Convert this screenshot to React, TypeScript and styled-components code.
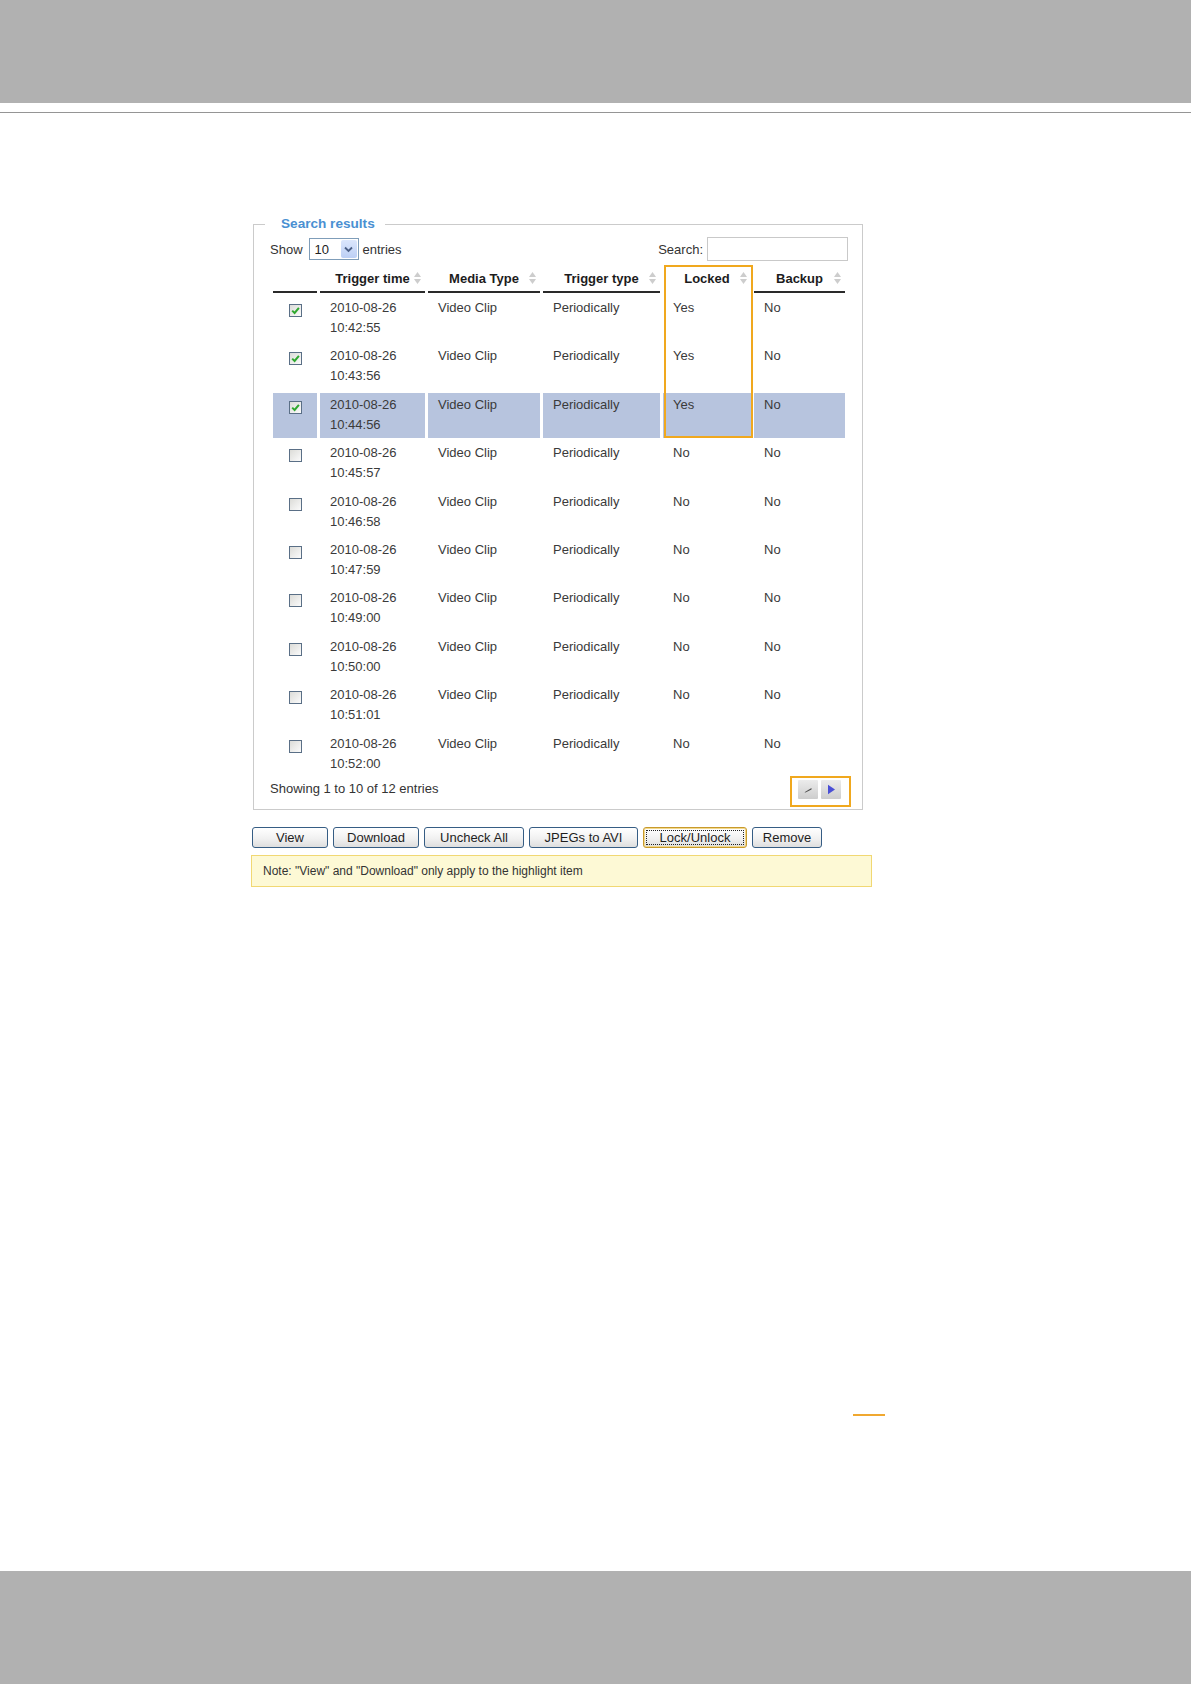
import React from 'react'
import styled, { createGlobalStyle, css } from 'styled-components'

const GlobalStyle = createGlobalStyle`
  html, body {
    margin: 0;
    padding: 0;
    background: #fff;
  }
  body {
    font-family: 'Liberation Sans', Arial, sans-serif;
    color: #333;
  }
`

type Row = { time: string; checked: boolean; locked: boolean }

const times = [
  '10:42:55',
  '10:43:56',
  '10:44:56',
  '10:45:57',
  '10:46:58',
  '10:47:59',
  '10:49:00',
  '10:50:00',
  '10:51:01',
  '10:52:00',
]

const rows: Row[] = times.map((time, i) => ({
  time,
  checked: i < 3,
  locked: i < 3,
}))

const HIGHLIGHT = 2

const columns = [
  { id: 'check', title: '', width: 44 },
  { id: 'time', title: 'Trigger time', width: 105 },
  { id: 'media', title: 'Media Type', width: 112 },
  { id: 'trigger', title: 'Trigger type', width: 117 },
  { id: 'locked', title: 'Locked', width: 88 },
  { id: 'backup', title: 'Backup', width: 91 },
]

const buttons = [
  { label: 'View', width: 76 },
  { label: 'Download', width: 86 },
  { label: 'Uncheck All', width: 100 },
  { label: 'JPEGs to AVI', width: 109 },
  { label: 'Lock/Unlock', width: 104, focused: true },
  { label: 'Remove', width: 70 },
]

const SortArrows = () => (
  <svg width="7" height="14" viewBox="0 0 7 14">
    <path d="M0 6 L3.5 1 L7 6 Z" fill="#cdcdcd" />
    <path d="M0 8 L3.5 13 L7 8 Z" fill="#cdcdcd" />
  </svg>
)

const CheckBox = ({ checked }: { checked: boolean }) => (
  <Box>
    {checked && (
      <svg width="11" height="11" viewBox="0 0 11 11">
        <path
          d="M2.2 5.6 L4.6 8 L8.9 2.8"
          fill="none"
          stroke="#2fa82f"
          strokeWidth="2"
        />
      </svg>
    )}
  </Box>
)

export default function App() {
  return (
    <Page>
      <GlobalStyle />
      <TopBand />
      <Rule />
      <Main>
        <Fieldset>
          <Legend>Search results</Legend>
          <Toolbar>
            <Group>
              Show
              <SelectBox>
                <span>10</span>
                <DropButton>
                  <svg width="9" height="7" viewBox="0 0 9 7">
                    <path
                      d="M1 1.5 L4.5 5 L8 1.5"
                      fill="none"
                      stroke="#4b5f86"
                      strokeWidth="1.8"
                    />
                  </svg>
                </DropButton>
              </SelectBox>
              entries
            </Group>
            <Group>
              Search:
              <SearchInput type="text" />
            </Group>
          </Toolbar>

          <TableWrap>
            <Table>
              <colgroup>
                {columns.map(c => (
                  <col key={c.id} style={{ width: c.width }} />
                ))}
              </colgroup>
              <thead>
                <tr>
                  {columns.map(c => (
                    <Th key={c.id} $bare={c.id === 'locked'}>
                      {c.title && (
                        <HeadInner>
                          <span />
                          <HeadLabel>{c.title}</HeadLabel>
                          <SortArrows />
                        </HeadInner>
                      )}
                    </Th>
                  ))}
                </tr>
              </thead>
              <tbody>
                {rows.map((r, i) => (
                  <tr key={r.time}>
                    <CheckCell $active={i === HIGHLIGHT}>
                      <CheckBox checked={r.checked} />
                    </CheckCell>
                    <Td $active={i === HIGHLIGHT}>
                      2010-08-26
                      <br />
                      {r.time}
                    </Td>
                    <Td $active={i === HIGHLIGHT}>Video Clip</Td>
                    <Td $active={i === HIGHLIGHT}>Periodically</Td>
                    <Td $active={i === HIGHLIGHT}>{r.locked ? 'Yes' : 'No'}</Td>
                    <Td $active={i === HIGHLIGHT}>No</Td>
                  </tr>
                ))}
              </tbody>
            </Table>
            <ColumnMark />
          </TableWrap>

          <Footer>
            <Info>Showing 1 to 10 of 12 entries</Info>
            <Pager>
              <PageButton>
                <svg width="20" height="19" viewBox="0 0 20 19">
                  <path d="M6.5 12.2 L13.5 8 L13.5 9.6 L7.6 12.6 Z" fill="#4e4e4e" />
                </svg>
              </PageButton>
              <PageButton>
                <svg width="20" height="19" viewBox="0 0 20 19">
                  <path d="M7 4.8 L14 9.5 L7 14.2 Z" fill="#4a4fd6" />
                </svg>
              </PageButton>
            </Pager>
          </Footer>
        </Fieldset>

        <ButtonBar>
          {buttons.map(b => (
            <ActionButton key={b.label} $width={b.width} $focused={!!b.focused}>
              {b.label}
            </ActionButton>
          ))}
        </ButtonBar>

        <Note>Note: "View" and "Download" only apply to the highlight item</Note>

        <PageMark />
      </Main>
      <BottomBand />
    </Page>
  )
}

const Page = styled.div`
  display: flex;
  flex-direction: column;
  width: 1191px;
  min-height: 1684px;
`

const TopBand = styled.div`
  height: 103px;
  background: #b1b1b1;
`

const Rule = styled.div`
  margin-top: 9px;
  height: 1px;
  background: #959595;
`

const Main = styled.main`
  flex: 1;
  padding-top: 103px;
`

const Fieldset = styled.fieldset`
  box-sizing: border-box;
  width: 610px;
  margin: 0 0 0 253px;
  padding: 0 14px 2px 16px;
  border: 1px solid #cbcbcb;
  min-width: 0;
`

const Legend = styled.legend`
  margin-left: -5px;
  padding: 0 10px 0 16px;
  font-size: 13.6px;
  line-height: 16px;
  font-weight: bold;
  color: #4a90d2;
`

const Toolbar = styled.div`
  display: flex;
  justify-content: space-between;
  align-items: center;
  height: 26px;
  margin-top: 4px;
  font-size: 13px;
  color: #333;
`

const Group = styled.div`
  display: flex;
  align-items: center;
  gap: 3px;
`

const SelectBox = styled.div`
  box-sizing: border-box;
  display: flex;
  align-items: center;
  justify-content: space-between;
  width: 50px;
  height: 22px;
  margin: 0 1px 0 3px;
  padding: 0 1px 0 5px;
  border: 1px solid #7f9db9;
  background: #fff;
  font-size: 13px;
  color: #222;
`

const DropButton = styled.div`
  display: flex;
  align-items: center;
  justify-content: center;
  width: 16px;
  height: 18px;
  border-radius: 2px;
  background: linear-gradient(#dbe6fc, #bccff5);
`

const SearchInput = styled.input`
  box-sizing: border-box;
  width: 141px;
  height: 24px;
  margin: 0 0 0 1px;
  padding: 2px 4px;
  border: 1px solid #c9c9c9;
  font: 13px 'Liberation Sans', Arial, sans-serif;
  outline: none;
`

const TableWrap = styled.div`
  position: relative;
`

const Table = styled.table`
  width: 100%;
  table-layout: fixed;
  border-collapse: separate;
  border-spacing: 3px;
  font-size: 13px;
`

const Th = styled.th<{ $bare: boolean }>`
  height: 26px;
  padding: 0;
  border-bottom: 2px solid ${p => (p.$bare ? 'transparent' : '#2a2a2a')};
  font-weight: bold;
  color: #1c1c1c;
  vertical-align: middle;
`

const HeadInner = styled.div`
  display: grid;
  grid-template-columns: 11px 1fr 11px;
  align-items: center;
`

const HeadLabel = styled.span`
  text-align: center;
  white-space: nowrap;
`

const cellBg = css<{ $active: boolean }>`
  background: ${p => (p.$active ? '#b7c4de' : 'transparent')};
`

const Td = styled.td<{ $active: boolean }>`
  height: 45.4px;
  box-sizing: border-box;
  padding: 2px 8px 0 10px;
  vertical-align: top;
  line-height: 20px;
  color: #3a3a3a;
  ${cellBg}
`

const CheckCell = styled.td<{ $active: boolean }>`
  height: 45.4px;
  box-sizing: border-box;
  padding: 8px 0 0;
  vertical-align: top;
  ${cellBg}
`

const Box = styled.span`
  box-sizing: border-box;
  display: flex;
  align-items: center;
  justify-content: center;
  width: 13px;
  height: 13px;
  margin: 0 auto;
  border: 1px solid #5a6f86;
  background: linear-gradient(135deg, #dcdcd8, #fbfbfb);
`

const ColumnMark = styled.div`
  position: absolute;
  top: 3px;
  left: 394px;
  box-sizing: border-box;
  width: 89px;
  height: 173px;
  border: 2px solid #f0a81e;
  pointer-events: none;
`

const Footer = styled.div`
  display: flex;
  justify-content: space-between;
  align-items: flex-start;
  margin-top: -4px;
`

const Info = styled.div`
  padding-top: 3px;
  font-size: 13px;
  line-height: 20px;
  color: #333;
`

const Pager = styled.div`
  display: flex;
  gap: 3px;
  margin-right: -3px;
  padding: 2px 8px 6px 6px;
  border: 2px solid #f0a81e;
`

const PageButton = styled.div`
  width: 20px;
  height: 19px;
  border-radius: 1px;
  background: linear-gradient(#ececec, #cdcdcd);
  svg {
    display: block;
  }
`

const ButtonBar = styled.div`
  display: flex;
  gap: 5px;
  margin: 17px 0 0 252px;
`

const ActionButton = styled.button<{ $width: number; $focused: boolean }>`
  box-sizing: border-box;
  width: ${p => p.$width}px;
  height: 21px;
  padding: 0;
  border: 1px solid #365d84;
  border-radius: 3px;
  background: linear-gradient(#ffffff, #f1f1f1 55%, #dedede);
  font: 13px 'Liberation Sans', Arial, sans-serif;
  color: #1e1e1e;
  ${p =>
    p.$focused &&
    css`
      border-color: #c89a2c;
      box-shadow: inset 0 0 0 1px #f2d88c;
      outline: 1px dotted #222;
      outline-offset: -4px;
    `}
`

const Note = styled.div`
  box-sizing: border-box;
  width: 621px;
  height: 32px;
  margin: 7px 0 0 251px;
  padding-left: 11px;
  border: 1px solid #f1d873;
  background: #fdf9d5;
  font-size: 12px;
  line-height: 30px;
  color: #333;
`

const PageMark = styled.div`
  width: 32px;
  height: 2px;
  margin: 527px 0 0 853px;
  background: #f0a830;
`

const BottomBand = styled.div`
  height: 113px;
  background: #b1b1b1;
`
